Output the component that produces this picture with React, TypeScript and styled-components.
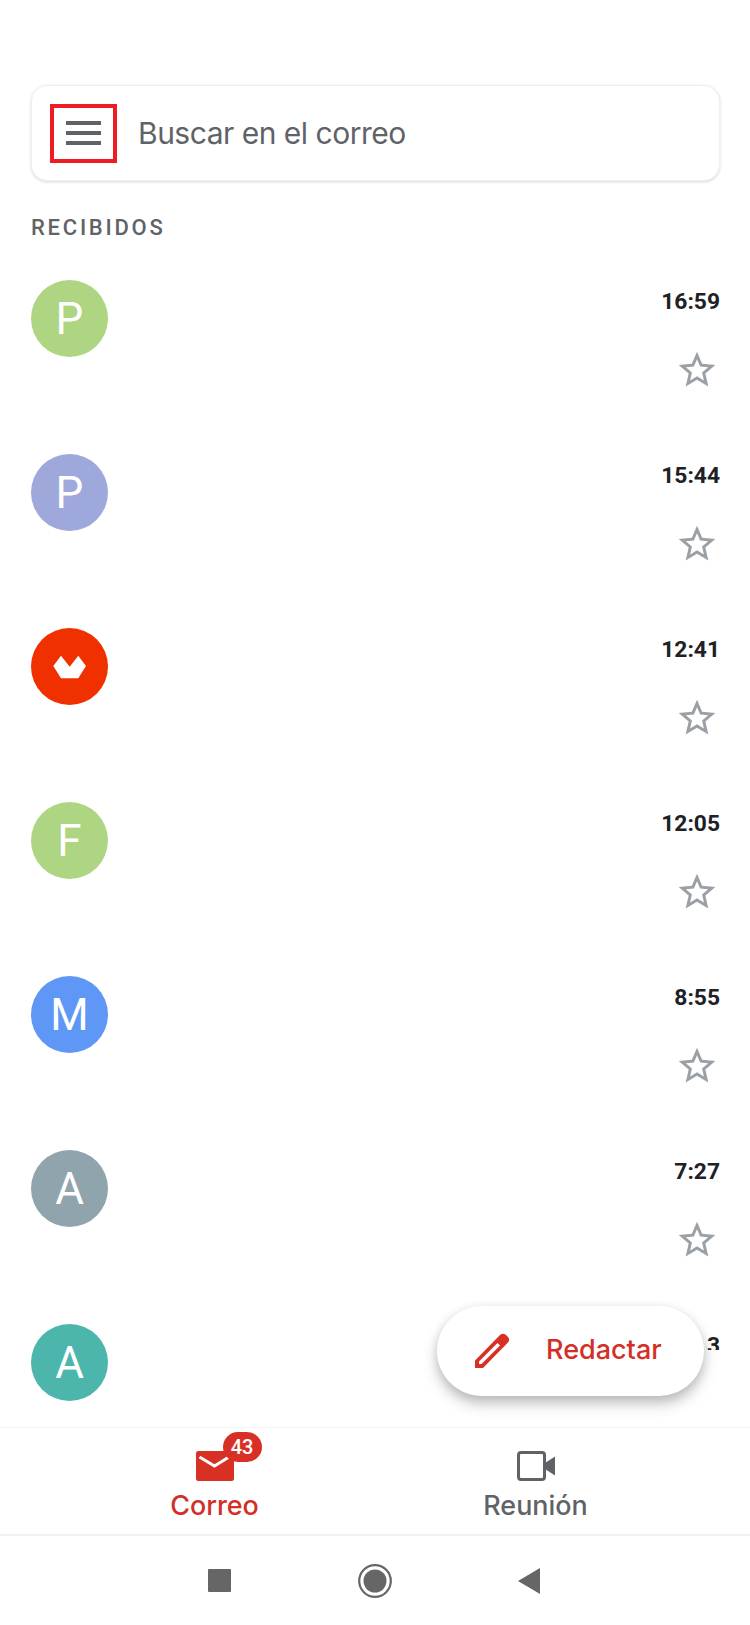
import React from "react";
import styled, { createGlobalStyle } from "styled-components";

const Global = createGlobalStyle`
  html, body { margin: 0; padding: 0; background: #fff; }
  body { font-family: Roboto, "Liberation Sans", sans-serif; }
`;

const Screen = styled.div`
  position: relative;
  width: 750px;
  height: 1625px;
  display: flex;
  flex-direction: column;
  overflow: hidden;
  background: #fff;
`;

const Main = styled.main`
  flex: 1;
  min-height: 0;
  overflow: hidden;
  padding: 85px 30px 0 31px;
`;

const SearchBar = styled.div`
  height: 96px;
  box-sizing: border-box;
  display: flex;
  align-items: center;
  padding-left: 18px;
  border-radius: 16px;
  background: #fff;
  border: 1px solid #f0f0f0;
  box-shadow: 0 1px 3px rgba(60, 64, 67, 0.2);
`;

const MenuFrame = styled.div`
  width: 67px;
  height: 59px;
  box-sizing: border-box;
  border: 4px solid #ee1c25;
  display: flex;
  align-items: center;
  justify-content: center;
  flex: none;
`;

const Placeholder = styled.span`
  margin-left: 21px;
  font-family: Inter, Roboto, sans-serif;
  font-size: 30px;
  letter-spacing: -0.5px;
  color: #5f6368;
`;

const SectionLabel = styled.div`
  margin-top: 35px;
  height: 24px;
  line-height: 24px;
  font-size: 22px;
  font-weight: 500;
  letter-spacing: 2.75px;
  color: #5f6368;
`;

const List = styled.div`
  margin-top: 40px;
`;

const Row = styled.div`
  height: 174px;
  display: flex;
  justify-content: space-between;
  align-items: flex-start;
`;

const Avatar = styled.div<{ $bg: string }>`
  width: 77px;
  height: 77px;
  border-radius: 50%;
  background: ${(p) => p.$bg};
  color: #fff;
  display: flex;
  align-items: center;
  justify-content: center;
  font-size: 44px;
  font-weight: 400;
  flex: none;
`;

const Meta = styled.div`
  display: flex;
  flex-direction: column;
  align-items: flex-end;
`;

const Time = styled.div`
  height: 26px;
  line-height: 26px;
  margin-top: 9px;
  font-size: 22.8px;
  font-weight: 700;
  color: #202124;
`;

const StarWrap = styled.div`
  margin-top: 33px;
  margin-right: 1px;
  height: 44px;
`;

const CornerMask = styled.div`
  position: absolute;
  left: 660px;
  right: 0;
  top: 1350px;
  height: 77px;
  background: #fff;
  &::before {
    content: "";
    position: absolute;
    left: 0;
    top: -22px;
    width: 46px;
    height: 22px;
    background: #fff;
  }
`;

const Fab = styled.button`
  position: absolute;
  left: 437px;
  top: 1306px;
  width: 267px;
  height: 90px;
  box-sizing: border-box;
  border: none;
  border-radius: 45px;
  background: #fff;
  box-shadow: 0 8px 14px rgba(60, 64, 67, 0.3), 0 2px 8px rgba(60, 64, 67, 0.12);
  display: flex;
  align-items: center;
  padding: 0 0 0 38px;
`;

const FabLabel = styled.span`
  margin-left: 36px;
  margin-bottom: 3px;
  font-family: Inter, Roboto, sans-serif;
  font-size: 27px;
  font-weight: 500;
  color: #d32f27;
`;

const TabBar = styled.nav`
  height: 106px;
  flex: none;
  display: flex;
  padding-left: 54px;
  border-top: 1px solid #f4f4f4;
  border-bottom: 2px solid #f1f1f1;
`;

const Tab = styled.div`
  width: 321px;
  display: flex;
  flex-direction: column;
  align-items: center;
`;

const TabIconBox = styled.div`
  position: relative;
  height: 53px;
  display: flex;
  align-items: flex-end;
`;

const Badge = styled.span`
  position: absolute;
  left: 27px;
  top: 4px;
  min-width: 39px;
  height: 30px;
  box-sizing: border-box;
  border-radius: 15px;
  background: #d93025;
  color: #fff;
  font-size: 20px;
  font-weight: 500;
  line-height: 30px;
  text-align: center;
`;

const TabLabel = styled.span<{ $active?: boolean }>`
  margin-top: 7px;
  font-family: Inter, Roboto, sans-serif;
  font-size: 26.9px;
  font-weight: 500;
  line-height: 34px;
  color: ${(p) => (p.$active ? "#d32f27" : "#5f6368")};
`;

const SystemBar = styled.div`
  height: 89px;
  flex: none;
  display: flex;
  align-items: center;
  justify-content: center;
`;

const SystemKey = styled.div<{ $nudge?: number }>`
  width: 155px;
  box-sizing: border-box;
  padding-right: ${(p) => p.$nudge ?? 0}px;
  display: flex;
  justify-content: center;
`;

const Hamburger = () => (
  <svg width="35" height="26" viewBox="0 0 35 26" fill="#5f6368">
    <rect x="0" y="1" width="35" height="4" />
    <rect x="0" y="11" width="35" height="4" />
    <rect x="0" y="21" width="35" height="4" />
  </svg>
);

const Star = () => (
  <svg width="44" height="44" viewBox="0 0 24 24" fill="#9aa0a6">
    <path d="M22 9.24l-7.19-.62L12 2 9.19 8.63 2 9.24l5.46 4.73L5.82 21 12 17.27 18.18 21l-1.63-7.03L22 9.24zM12 15.4l-3.76 2.27 1-4.28-3.32-2.88 4.38-.38L12 6.1l1.71 4.04 4.38.38-3.32 2.88 1 4.28L12 15.4z" />
  </svg>
);

const RedMark = () => (
  <svg width="34" height="24" viewBox="0 0 34 24" fill="#fff">
    <path d="M0.3 11 L8 0.7 L16.7 11.7 L25.3 0.7 L33 11 L25.3 23.3 L8 23.3 Z" />
  </svg>
);

const Pencil = () => (
  <svg width="35" height="36" viewBox="0 0 35 36" fill="#d93025" fillRule="evenodd">
    <path d="M0 35 L0 27.5 L25 2 Q28 -0.5 31 2 L33 4 Q35.5 7 32.5 10 L8 35 Z M4 31 L6.5 31 L25 12.5 L22.5 10 L4 28.5 Z" />
  </svg>
);

const MailIcon = () => (
  <svg width="38" height="30" viewBox="0 0 38 30">
    <rect x="0" y="0" width="38" height="30" rx="2.5" fill="#d93025" />
    <path d="M3.5 6 L18.5 15 L33 6" fill="none" stroke="#fff" strokeWidth="3" />
  </svg>
);

const VideoIcon = () => (
  <svg width="38" height="30" viewBox="0 0 38 30">
    <rect x="1.5" y="1.5" width="26" height="27" rx="2.5" fill="none" stroke="#5f6368" strokeWidth="3" />
    <path d="M28 12 L38 5.5 L38 24.5 L28 18 Z" fill="#5f6368" />
  </svg>
);

const rows = [
  { bg: "#aed581", letter: "P", time: "16:59" },
  { bg: "#9fa8da", letter: "P", time: "15:44" },
  { bg: "#f13000", mark: true, time: "12:41" },
  { bg: "#aed581", letter: "F", time: "12:05" },
  { bg: "#5e97f6", letter: "M", time: "8:55" },
  { bg: "#90a4ae", letter: "A", time: "7:27" },
  { bg: "#4db6ac", letter: "A", time: "6:53" },
];

export default function App() {
  return (
    <Screen>
      <Global />
      <Main>
        <SearchBar>
          <MenuFrame>
            <Hamburger />
          </MenuFrame>
          <Placeholder>Buscar en el correo</Placeholder>
        </SearchBar>
        <SectionLabel>RECIBIDOS</SectionLabel>
        <List>
          {rows.map((r, i) => (
            <Row key={i}>
              <Avatar $bg={r.bg}>{r.mark ? <RedMark /> : r.letter}</Avatar>
              <Meta>
                <Time>{r.time}</Time>
                <StarWrap>
                  <Star />
                </StarWrap>
              </Meta>
            </Row>
          ))}
        </List>
      </Main>
      <CornerMask />
      <Fab>
        <Pencil />
        <FabLabel>Redactar</FabLabel>
      </Fab>
      <TabBar>
        <Tab>
          <TabIconBox>
            <MailIcon />
            <Badge>43</Badge>
          </TabIconBox>
          <TabLabel $active>Correo</TabLabel>
        </Tab>
        <Tab>
          <TabIconBox>
            <VideoIcon />
          </TabIconBox>
          <TabLabel>Reunión</TabLabel>
        </Tab>
      </TabBar>
      <SystemBar>
        <SystemKey $nudge={1}>
          <svg width="23" height="23" viewBox="0 0 23 23"><rect width="23" height="23" rx="1" fill="#666" /></svg>
        </SystemKey>
        <SystemKey>
          <svg width="34" height="34" viewBox="0 0 34 34">
            <circle cx="17" cy="17" r="15.8" fill="none" stroke="#666" strokeWidth="2.2" />
            <circle cx="17" cy="17" r="11.5" fill="#666" />
          </svg>
        </SystemKey>
        <SystemKey $nudge={3}>
          <svg width="22" height="26" viewBox="0 0 22 26"><path d="M0 13 L22 0 L22 26 Z" fill="#666" /></svg>
        </SystemKey>
      </SystemBar>
    </Screen>
  );
}
